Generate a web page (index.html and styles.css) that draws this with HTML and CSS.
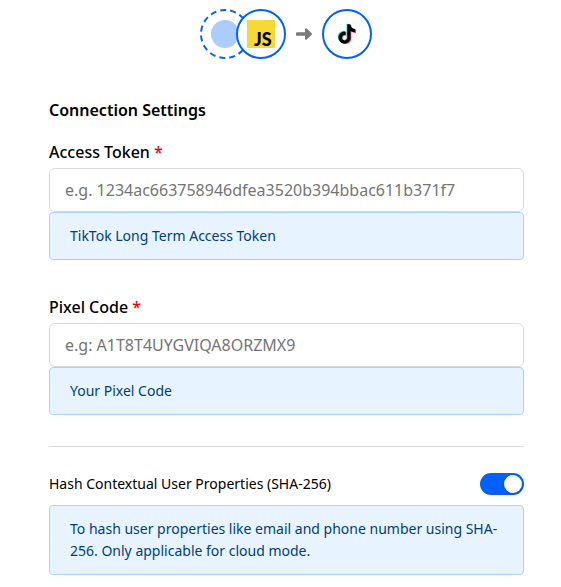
FILE: index.html
```html
<!DOCTYPE html>
<html lang="en">
<head>
<meta charset="utf-8">
<meta name="viewport" content="width=device-width, initial-scale=1">
<title>Connection Settings</title>
<link rel="stylesheet" href="styles.css">
</head>
<body>
<main class="page">
  <div class="flow">
    <div class="sources">
      <svg class="node" viewBox="0 0 50 50" aria-hidden="true">
        <circle cx="25" cy="25" r="24" fill="#fff" stroke="#0061ff" stroke-width="2" stroke-dasharray="6 4.05" stroke-dashoffset="3"/>
        <circle cx="25" cy="25" r="14" fill="#aaccff"/>
      </svg>
      <svg class="node node-front" viewBox="0 0 50 50" role="img" aria-label="JavaScript">
        <circle cx="25" cy="25" r="24" fill="#fff" stroke="#0061ff" stroke-width="2"/>
        <path fill="#f7d936" d="M11 11h28v28H11z"/>
        <text class="js-mark" x="18" y="37">JS</text>
      </svg>
    </div>
    <svg class="arrow" viewBox="0 0 16 12" aria-hidden="true">
      <path d="M1.500 6H11" stroke="#7a7a7a" stroke-width="3.600" stroke-linecap="round"/>
      <path d="M10 1.300 15 6 10 10.700z" fill="#7a7a7a" stroke="#7a7a7a" stroke-width="2" stroke-linejoin="round"/>
    </svg>
    <svg class="node" viewBox="0 0 50 50" role="img" aria-label="TikTok">
      <defs>
        <path id="note" d="M12.525.02c1.31-.02 2.61-.01 3.91-.02.08 1.53.63 3.09 1.75 4.17 1.12 1.11 2.7 1.62 4.24 1.79v4.03c-1.44-.05-2.89-.35-4.2-.97-.57-.26-1.1-.59-1.62-.93-.01 2.92.01 5.84-.02 8.75-.08 1.4-.54 2.79-1.35 3.94-1.31 1.92-3.58 3.17-5.91 3.21-1.43.08-2.86-.31-4.08-1.03-2.02-1.19-3.44-3.37-3.65-5.71-.02-.5-.03-1-.01-1.49.18-1.9 1.12-3.72 2.58-4.96 1.66-1.44 3.98-2.13 6.15-1.72.02 1.48-.04 2.96-.04 4.44-.99-.32-2.15-.23-3.02.37-.63.41-1.11 1.04-1.36 1.75-.21.51-.15 1.07-.14 1.61.24 1.64 1.82 3.02 3.5 2.87 1.12-.01 2.19-.66 2.77-1.61.19-.33.4-.67.41-1.06.1-1.79.06-3.57.07-5.36.01-4.03-.01-8.05.02-12.07z"/>
      </defs>
      <circle cx="25" cy="25" r="24" fill="#fff" stroke="#0061ff" stroke-width="2"/>
      <g transform="translate(15.200 15.300) scale(.8)">
        <use href="#note" x="-1" y="-.8" fill="#25f4ee"/>
        <use href="#note" x="1" y=".8" fill="#fe2c55"/>
        <use href="#note" fill="#000"/>
      </g>
    </svg>
  </div>

  <form class="settings">
    <h1 class="title">Connection Settings</h1>
    <div class="field">
      <label class="label" for="token">Access Token <span class="required">*</span></label>
      <input class="input" id="token" type="text" placeholder="e.g. 1234ac663758946dfea3520b394bbac611b371f7" required>
      <p class="note">TikTok Long Term Access Token</p>
    </div>
    <div class="field">
      <label class="label" for="pixel">Pixel Code <span class="required">*</span></label>
      <input class="input" id="pixel" type="text" placeholder="e.g: A1T8T4UYGVIQA8ORZMX9" required>
      <p class="note">Your Pixel Code</p>
    </div>
    <hr class="divider">
    <div class="toggle-row">
      <label class="toggle-label" for="hash">Hash Contextual User Properties (SHA-256)</label>
      <input class="switch" id="hash" type="checkbox" role="switch" checked>
    </div>
    <p class="note">To hash user properties like email and phone number using SHA-256. Only applicable for cloud mode.</p>
  </form>
</main>
</body>
</html>
```
FILE: styles.css
```css
* {
  box-sizing: border-box;
}

body {
  margin: 0;
  background: #fff;
  color: #000;
  font-family: "Noto Sans", sans-serif;
  font-size: 14px;
  line-height: 22px;
}

.page {
  padding: 9px 37px 12px 49px;
}

.flow {
  display: flex;
  align-items: center;
  justify-content: center;
  gap: 10px;
  margin-bottom: 39px;
  padding-right: 2px;
}

.sources {
  display: flex;
}

.node {
  display: block;
  width: 50px;
  height: 50px;
}

.node-front {
  margin-left: -14px;
}

.js-mark {
  font-family: Lato, sans-serif;
  font-size: 18px;
  font-weight: 900;
}

.arrow {
  width: 16px;
  height: 12px;
}

.title {
  margin: 0 0 18px;
  font-size: 16px;
  font-weight: 600;
  line-height: 24px;
}

.field {
  margin-bottom: 35px;
}

.label {
  display: block;
  margin-bottom: 4px;
  font-size: 16px;
  font-weight: 500;
  line-height: 24px;
}

.required {
  color: #ff0000;
}

.input {
  display: block;
  width: 100%;
  height: 44px;
  padding: 0 15px;
  border: 1px solid #d9d9d9;
  border-radius: 6px;
  background: #fff;
  color: #000;
  font: inherit;
  font-size: 16px;
}

.input::placeholder {
  color: #757575;
  opacity: 1;
}

.note {
  margin: 0;
  padding: 12px 20px;
  border: 1px solid #abd2ff;
  border-radius: 4px;
  background: #e7f3fe;
  color: #003d80;
}

.divider {
  height: 1px;
  margin: 31px 0 26px;
  border: 0;
  background: #d9d9d9;
}

.field + .divider {
  margin-top: -4px;
}

.toggle-row {
  display: flex;
  align-items: center;
  justify-content: space-between;
  margin-bottom: 10px;
}

.switch {
  display: flex;
  align-items: center;
  justify-content: flex-end;
  width: 44px;
  height: 22px;
  margin: 0;
  padding: 2px;
  border-radius: 11px;
  background: #0061ff;
  appearance: none;
}

.switch::before {
  width: 18px;
  height: 18px;
  border-radius: 50%;
  background: #fff;
  box-shadow: 0 2px 4px rgba(0, 35, 11, 0.2);
  content: "";
}

.switch:not(:checked) {
  justify-content: flex-start;
  background: #bfbfbf;
}
```
